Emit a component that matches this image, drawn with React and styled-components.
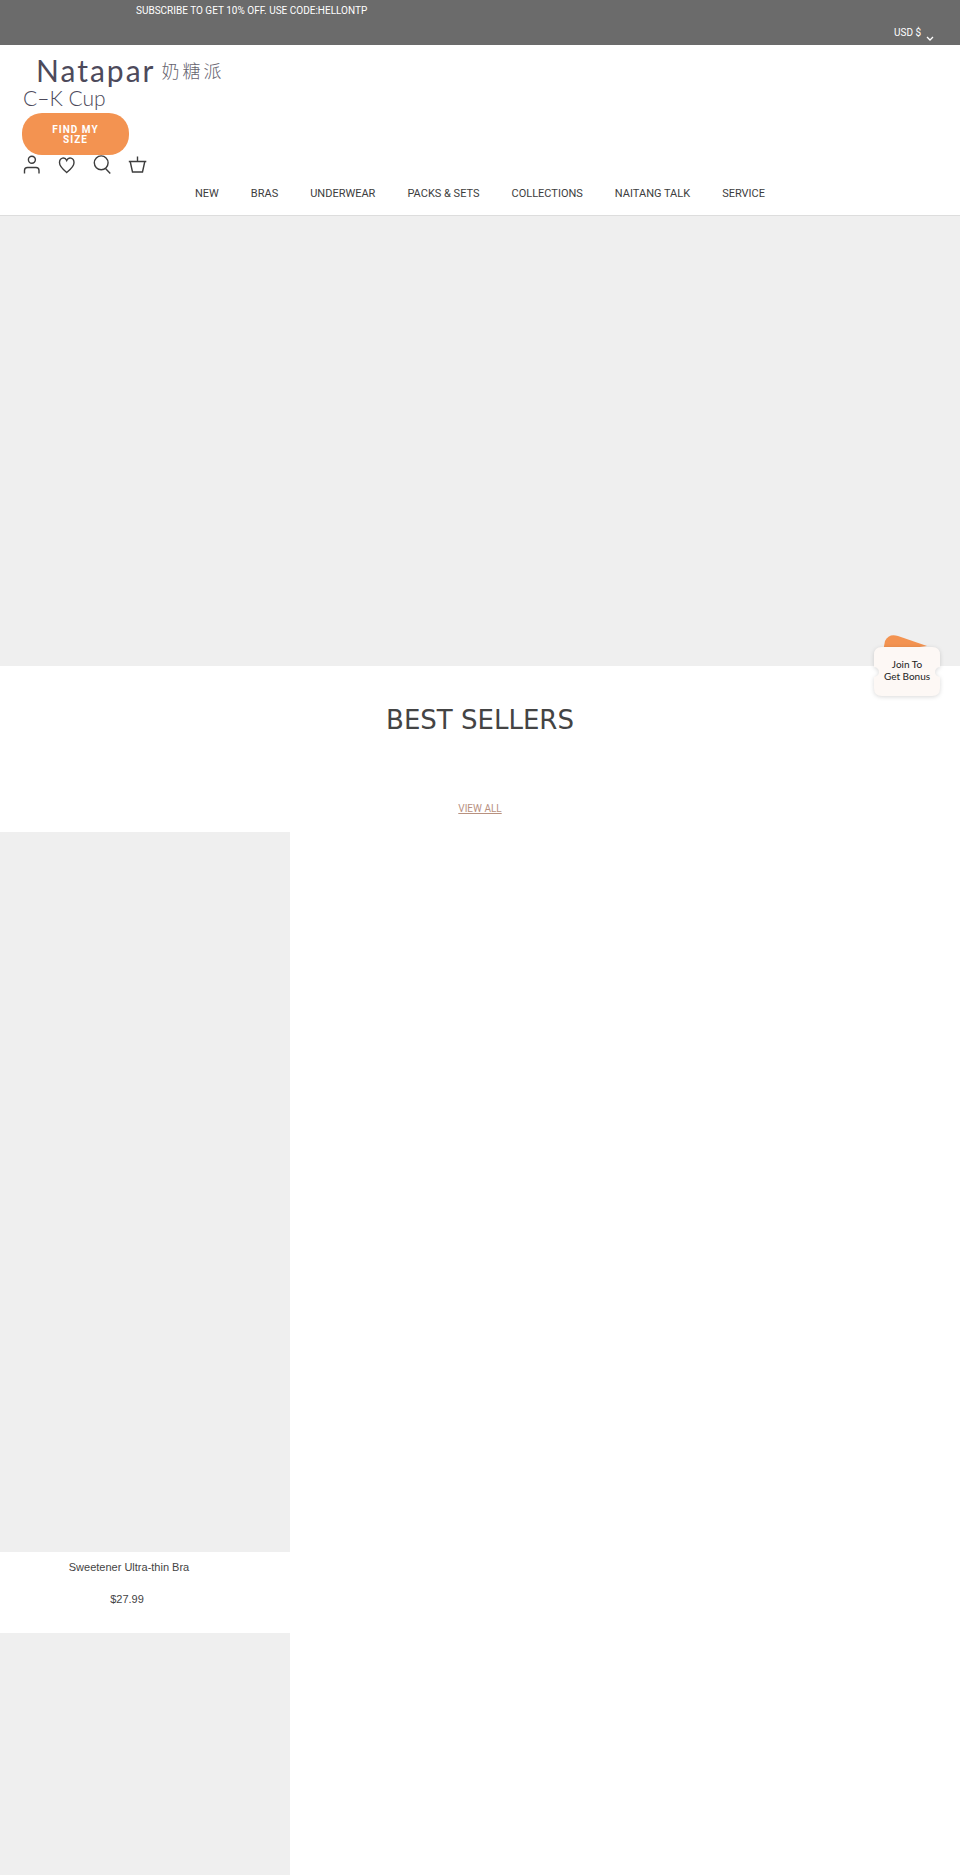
import React from "react";
import styled, { createGlobalStyle } from "styled-components";

const GlobalStyle = createGlobalStyle`
  * {
    box-sizing: border-box;
  }
  body {
    margin: 0;
    background-color: white;
    color: #444;
    font-family: Roboto, Arial, sans-serif;
    font-size: 11px;
  }
`;

const TopBar = styled.div`
  height: 45px;
  display: flex;
  flex-direction: column;
  justify-content: space-between;
  padding: 4px 26px 3px 136px;
  background-color: #6b6b6b;
  color: white;
  font-size: 10px;
  line-height: 14px;
`;
const Announcement = styled.p`
  margin: 0;
`;
const Currency = styled.label`
  display: flex;
  align-self: flex-end;
  align-items: flex-end;
  gap: 4px;
  & > select {
    appearance: none;
    padding: 0 0 2px;
    border: none;
    background: none;
    color: white;
    font-family: inherit;
    font-size: 10px;
    line-height: 14px;
  }
`;

const Header = styled.header`
  height: 171px;
  padding: 8px 22px 0;
  border-bottom: 1px solid #ddd;
`;
const Logo = styled.a`
  display: block;
  color: #4d4a5b;
  text-decoration: none;
`;
const LogoName = styled.span`
  display: flex;
  align-items: center;
  gap: 6px;
  padding-left: 14px;
  font-family: Lato, sans-serif;
  font-size: 30px;
  line-height: 34px;
  letter-spacing: 2px;
`;
const LogoChinese = styled.span`
  padding-top: 4px;
  font-family: "Liberation Serif", "Noto Sans CJK SC", sans-serif;
  font-size: 18px;
  font-weight: 300;
  line-height: 30px;
  letter-spacing: 3px;
  color: #66646f;
`;
const LogoSize = styled.span`
  display: block;
  padding-left: 1px;
  font-family: Lato, sans-serif;
  font-weight: 300;
  font-size: 21px;
  line-height: 22px;
`;
const FindButton = styled.button`
  display: block;
  width: 107px;
  height: 42px;
  margin-top: 4px;
  padding: 2px 26px 0;
  border: none;
  border-radius: 20px;
  background-color: #f39351;
  color: white;
  font-family: inherit;
  font-size: 10px;
  font-weight: 700;
  line-height: 10px;
  letter-spacing: 1px;
  cursor: pointer;
`;
const Icons = styled.div`
  display: flex;
  gap: 15px;
  & > a {
    display: block;
    width: 20px;
    height: 20px;
    color: #3d3d3d;
  }
  & svg {
    display: block;
    overflow: visible;
  }
`;
const Nav = styled.nav`
  display: flex;
  justify-content: center;
  gap: 32px;
  margin-top: 11px;
  & > a {
    color: #3d3d3d;
    font-size: 11px;
    line-height: 16px;
    text-decoration: none;
  }
`;

const Hero = styled.section`
  position: relative;
  height: 450px;
  background-color: #efefef;
`;
const Bonus = styled.button`
  position: absolute;
  right: 17px;
  bottom: -34px;
  width: 72px;
  height: 68px;
  padding: 7px 0 0;
  border: none;
  background: none;
  color: #222;
  font-family: Lato, sans-serif;
  font-size: 10px;
  line-height: 12px;
  cursor: pointer;
  & > svg {
    position: absolute;
    top: 0;
    left: 0;
    overflow: visible;
  }
  & > span {
    position: relative;
    display: block;
    white-space: nowrap;
  }
`;
const Ticket = styled.path`
  fill: #fdf8f5;
  filter: drop-shadow(0 1px 2px rgba(0, 0, 0, 0.15));
`;

const Section = styled.section`
  padding-top: 35px;
`;
const SectionTitle = styled.h2`
  margin: 0;
  font-family: "DejaVu Sans", sans-serif;
  font-size: 26px;
  font-weight: 400;
  line-height: 38px;
  text-align: center;
`;
const ViewAll = styled.a`
  display: block;
  width: fit-content;
  margin: 63px auto 16px;
  color: #b8917f;
  font-size: 10px;
  line-height: 14px;
`;
const Product = styled.article`
  width: calc(100% / 3 - 30px);
  margin-bottom: 26px;
`;
const ProductImage = styled.div`
  height: 720px;
  background-color: #efefef;
`;
const ProductInfo = styled.div`
  padding: 7px 32px 0 0;
  font-family: "Liberation Sans", Arial, sans-serif;
  text-align: center;
  line-height: 16px;
  & > h3 {
    margin: 0 0 16px;
    font-size: 11px;
    font-weight: 400;
  }
  & > p {
    margin: 0 4px 0 0;
  }
`;

const links = [
  "NEW",
  "BRAS",
  "UNDERWEAR",
  "PACKS & SETS",
  "COLLECTIONS",
  "NAITANG TALK",
  "SERVICE",
];

const iconPaths = [
  {
    name: "Account",
    path: "M2.500 18.500v-3q0-3 3-3h8.500q3 0 3 3v3M6.400 4.800a3.500 3.500 0 1 0 7 0a3.500 3.500 0 1 0-7 0",
  },
  {
    name: "Wishlist",
    path: "M9.700 17.500C6 14.500 2.500 11.500 2.500 7.800C2.500 2.500 8 1.500 9.700 5.500C11.500 1.500 17 2.500 17 7.800C17 11.500 13.500 14.500 9.700 17.500Z",
  },
  {
    name: "Search",
    path: "M2.300 7.800a6.900 6.900 0 1 0 13.800 0a6.900 6.900 0 1 0-13.800 0M13.500 13.500l4.800 5",
  },
  {
    name: "Cart",
    path: "M1.800 6.500h17.500M3.200 6.500l2.300 10.500h10l2.300-10.500M10.500 1.500v5",
  },
];

const Icon = ({ path }) => (
  <svg width="20" height="20" viewBox="0 0 20 20" fill="none" stroke="currentColor" strokeWidth="1.4">
    <path d={path} />
  </svg>
);

const App = () => {
  return (
    <>
      <GlobalStyle />
      <TopBar>
        <Announcement>SUBSCRIBE TO GET 10% OFF. USE CODE:HELLONTP</Announcement>
        <Currency>
          <select name="currency" aria-label="Currency">
            <option value="usd">USD $</option>
          </select>
          <svg width="8" height="6" viewBox="0 0 8 6" fill="none" stroke="white" strokeWidth="1.3">
            <path d="M1 1l3 3l3-3" />
          </svg>
        </Currency>
      </TopBar>
      <Header>
        <Logo href="#">
          <LogoName>
            Natapar <LogoChinese lang="zh">奶糖派</LogoChinese>
          </LogoName>
          <LogoSize>C–K Cup</LogoSize>
        </Logo>
        <FindButton>FIND MY SIZE</FindButton>
        <Icons>
          {iconPaths.map((icon) => (
            <a href="#" key={icon.name} aria-label={icon.name}>
              <Icon path={icon.path} />
            </a>
          ))}
        </Icons>
        <Nav>
          {links.map((link) => (
            <a href="#" key={link}>
              {link}
            </a>
          ))}
        </Nav>
      </Header>
      <Hero>
        <Bonus>
          <svg width="72" height="68" viewBox="0 0 72 68">
            <path d="M12 20L14 9Q18 1 27 4L56 14Z" fill="#f39351" />
            <Ticket d="M11 15H61Q69 15 69 23V35A5 5 0 0 0 69 45V56Q69 64 61 64H11Q3 64 3 56V45A5 5 0 0 0 3 35V23Q3 15 11 15Z" />
          </svg>
          <span>Join To</span>
          <span>Get Bonus</span>
        </Bonus>
      </Hero>
      <Section>
        <SectionTitle>BEST SELLERS</SectionTitle>
        <ViewAll href="#">VIEW ALL</ViewAll>
        <Product>
          <ProductImage />
          <ProductInfo>
            <h3>Sweetener Ultra-thin Bra</h3>
            <p>$27.99</p>
          </ProductInfo>
        </Product>
        <Product>
          <ProductImage />
        </Product>
      </Section>
    </>
  );
};

export default App;
